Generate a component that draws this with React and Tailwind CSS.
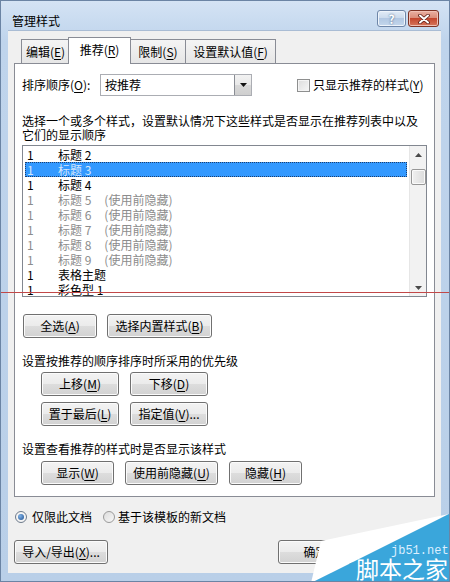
import React from "react";

function Btn({ w, children, className = "" }) {
  return (
    <div
      className={`h-[24px] ${w} flex items-center justify-center rounded-[3px] border border-[#707070] bg-[linear-gradient(#f3f3f3,#ebebeb_50%,#dddddd_50%,#d2d2d2)] shadow-[inset_0_0_0_1px_#fbfbfb] text-[12px] leading-[16px] text-black ${className}`}
    >
      {children}
    </div>
  );
}

function U({ children }) {
  return <span className="underline underline-offset-2">{children}</span>;
}

const rows = [
  { name: "标题 2" },
  { name: "标题 3", sel: true },
  { name: "标题 4" },
  { name: "标题 5", hidden: true },
  { name: "标题 6", hidden: true },
  { name: "标题 7", hidden: true },
  { name: "标题 8", hidden: true },
  { name: "标题 9", hidden: true },
  { name: "表格主题" },
  { name: "彩色型 1" },
];

function Tab({ w, active, children }) {
  return active ? (
    <div className={`${w} h-[27px] -mb-px relative z-10 -mx-px flex items-start justify-center pt-[4px] border border-b-0 border-[#898c95] bg-white text-[12px] leading-[16px]`}>
      {children}
    </div>
  ) : (
    <div className={`${w} h-[24px] flex items-center justify-center border border-b-0 border-[#898c95] bg-[linear-gradient(#f4f4f4,#e6e6e6)] text-[12px] leading-[16px] -mr-px`}>
      {children}
    </div>
  );
}

export default function App() {
  return (
    <div className="relative w-[450px] h-[582px] overflow-hidden border border-[#6b84a4] bg-[linear-gradient(#d4e3f4,#bfd4ec_40px,#b9cfe8)] flex flex-col font-['Noto_Sans_CJK_SC','Noto_Sans',sans-serif] text-black">
      {/* title bar */}
      <div className="h-[29px] flex items-start justify-between pl-[11px] pr-[10px]">
        <div className="mt-[11px] text-[12px] leading-[18px]">管理样式</div>
        <div className="mt-[9px] flex gap-[2px]">
          <div className="w-[29px] h-[17px] rounded-[3px] border border-[#6e86a8] bg-[linear-gradient(#e2ecf7,#c9d9ec_50%,#b2c8e3_50%,#c4d7ec)] shadow-[inset_0_0_0_1px_#eef4fb] flex items-center justify-center text-[12px] font-bold leading-none text-white [text-shadow:0_0_2px_#2d4c74]">
            ?
          </div>
          <div className="w-[31px] h-[17px] rounded-[3px] border border-[#7d3325] bg-[linear-gradient(#eab0a2,#d98a76_50%,#c4472e_50%,#d6765c)] shadow-[inset_0_0_0_1px_#f0c0b4] flex items-center justify-center">
            <svg width="12" height="10" viewBox="0 0 12 10">
              <path d="M2 1.5 L10 8.5 M10 1.5 L2 8.5" stroke="#5a1c14" strokeWidth="3.6" strokeLinecap="round" />
              <path d="M2 1.5 L10 8.5 M10 1.5 L2 8.5" stroke="#ffffff" strokeWidth="2" strokeLinecap="round" />
            </svg>
          </div>
        </div>
      </div>

      {/* client */}
      <div className="ml-[7px] mr-[8px] h-[543px] bg-[#f0f0f0] border-t border-[#a9bcd4] pt-[6px] pl-[6px] flex flex-col">
        <div className="h-[26px] flex items-end pl-[7px]">
          <Tab w="w-[49px]">编辑(<U>E</U>)</Tab>
          <Tab w="w-[63px]" active>推荐(<U>R</U>)</Tab>
          <Tab w="w-[56px]">限制(<U>S</U>)</Tab>
          <Tab w="w-[91px]">设置默认值(<U>F</U>)</Tab>
        </div>

        {/* panel */}
        <div className="w-[421px] h-[434px] border border-[#898c95] bg-white flex flex-col text-[12px]">
          <div className="mt-[10px] h-[22px] flex items-center pl-[7px]">
            <div className="w-[78px] leading-[16px]">
              排序顺序(<U>O</U>):
            </div>
            <div className="w-[152px] h-[22px] border border-[#abadb3] flex">
              <div className="flex-1 pl-[4px] leading-[20px]">按推荐</div>
              <div className="w-[17px] h-full border-l border-[#8a8d94] bg-[linear-gradient(#f2f2f2,#e8e8e8_50%,#d8d8d8_50%,#cfcfcf)] flex items-center justify-center">
                <svg width="7" height="4" viewBox="0 0 7 4">
                  <path d="M0 0 H7 L3.5 4 Z" fill="#111" />
                </svg>
              </div>
            </div>
            <div className="ml-[45px] w-[13px] h-[13px] border border-[#8e8f8f] bg-[linear-gradient(135deg,#dcdcdc,#f6f6f6)] shadow-[inset_0_0_0_1px_#f4f4f4]" />
            <div className="ml-[3px] leading-[16px]">
              只显示推荐的样式(<U>Y</U>)
            </div>
          </div>

          <div className="mt-[18px] pl-[7px] leading-[14px]">
            选择一个或多个样式，设置默认情况下这些样式是否显示在推荐列表中以及
            <br />
            它们的显示顺序
          </div>

          {/* list */}
          <div className="mt-[3px] ml-[7px] w-[405px] h-[152px] border border-[#828790] flex">
            <div className="flex-1 overflow-hidden pt-[1px] pl-[2px]">
              {rows.map((r, i) => (
                <div
                  key={i}
                  className={`w-[382px] h-[15px] flex items-center leading-[15px] ${
                    r.sel
                      ? "bg-[#3399ff] text-[#d4e6fb] outline outline-1 outline-dotted outline-offset-[-1px] outline-[#1d3f6e]"
                      : r.hidden
                      ? "text-[#8c8c8c]"
                      : "text-black"
                  }`}
                >
                  <div className="w-[33px] pl-[2px]">1</div>
                  <div>{r.name}</div>
                  {r.hidden && <div className="ml-[13px]">(使用前隐藏)</div>}
                </div>
              ))}
            </div>
            <div className="w-[17px] h-full bg-[#f2f2f2] border-l border-[#e6e6e6] flex flex-col items-center">
              <div className="h-[17px] flex items-center justify-center">
                <svg width="7" height="4" viewBox="0 0 7 4">
                  <path d="M0 4 H7 L3.5 0 Z" fill="#4a4a4a" />
                </svg>
              </div>
              <div className="mt-[6px] w-[15px] h-[16px] rounded-[2px] border border-[#979797] bg-[linear-gradient(90deg,#f0f0f0,#dcdcdc)] shadow-[inset_0_0_0_1px_#fafafa]" />
              <div className="flex-1" />
              <div className="h-[17px] flex items-center justify-center">
                <svg width="7" height="4" viewBox="0 0 7 4">
                  <path d="M0 0 H7 L3.5 4 Z" fill="#4a4a4a" />
                </svg>
              </div>
            </div>
          </div>

          <div className="mt-[17px] pl-[8px] flex gap-[10px]">
            <Btn w="w-[74px]">全选(<U>A</U>)</Btn>
            <Btn w="w-[105px]">选择内置样式(<U>B</U>)</Btn>
          </div>

          <div className="mt-[15px] pl-[7px] leading-[16px]">设置按推荐的顺序排序时所采用的优先级</div>
          <div className="mt-[3px] pl-[26px] flex gap-[11px]">
            <Btn w="w-[78px]">上移(<U>M</U>)</Btn>
            <Btn w="w-[78px]">下移(<U>D</U>)</Btn>
          </div>
          <div className="mt-[6px] pl-[26px] flex gap-[11px]">
            <Btn w="w-[78px]">置于最后(<U>L</U>)</Btn>
            <Btn w="w-[78px]">指定值(<U>V</U>)...</Btn>
          </div>

          <div className="mt-[15px] pl-[7px] leading-[16px]">设置查看推荐的样式时是否显示该样式</div>
          <div className="mt-[4px] pl-[26px] flex gap-[11px]">
            <Btn w="w-[73px]">显示(<U>W</U>)</Btn>
            <Btn w="w-[93px]">使用前隐藏(<U>U</U>)</Btn>
            <Btn w="w-[73px]">隐藏(<U>H</U>)</Btn>
          </div>
        </div>

        {/* radios */}
        <div className="mt-[12px] h-[16px] flex items-center pl-[1px] text-[12px] leading-[16px]">
          <div className="w-[12px] h-[12px] rounded-full border border-[#6d7a8b] bg-[#f4f4f4] flex items-center justify-center">
            <div className="w-[6px] h-[6px] rounded-full bg-[radial-gradient(circle_at_35%_35%,#7fb2e8,#1f4f8f)]" />
          </div>
          <div className="ml-[5px]">仅限此文档</div>
          <div className="ml-[11px] w-[12px] h-[12px] rounded-full border border-[#9a9a9a] bg-[linear-gradient(135deg,#dcdcdc,#f8f8f8)]" />
          <div className="ml-[3px]">基于该模板的新文档</div>
        </div>

        <div className="mt-[15px] flex">
          <Btn w="w-[94px]">导入/导出(<U>X</U>)...</Btn>
          <Btn w="w-[75px]" className="ml-[170px] border-[#3c7fb1] shadow-[inset_0_0_0_1px_#bfe6f8]">
            确定
          </Btn>
        </div>
      </div>

      {/* red line across the capture */}
      <div className="absolute left-0 top-[291px] w-full h-px bg-[#c24848]" />

      {/* watermark */}
      <svg className="absolute left-[300px] top-[505px]" width="150" height="77" viewBox="0 0 150 77">
        <polygon points="20,35 148,8 10,77" fill="#ffffff" />
        <polygon points="10,77 148,8 150,7 150,77" fill="#3aa6db" />
      </svg>
      <div className="absolute left-[390px] top-[543px] text-[12px] leading-[14px] text-[#dcefff] font-['Liberation_Mono',monospace]">
        jb51.net
      </div>
      <div className="absolute left-[355px] top-[556px] text-[23px] leading-[23px] text-white font-['Noto_Sans_CJK_SC',sans-serif]">
        脚本之家
      </div>
    </div>
  );
}
